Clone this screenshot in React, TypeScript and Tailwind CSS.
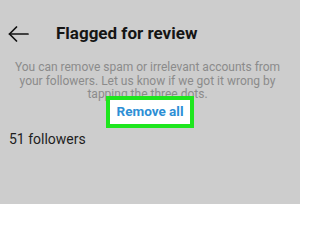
function BackArrow() {
  return (
    <svg width="21" height="16" viewBox="0 0 21 16" fill="none" stroke="#111" strokeWidth="1.7" strokeLinecap="round" strokeLinejoin="round">
      <path d="M1.5 8H20" />
      <path d="M8.5 1L1.5 8l7 7" />
    </svg>
  );
}

export default function App() {
  return (
    <div className="w-[300px] h-[204px] overflow-hidden bg-[#cdcdcd] font-['Roboto',sans-serif]">
      {/* Header */}
      <div className="flex items-center h-[24px] mt-[22px] pl-[8px]">
        <BackArrow />
        <h1 className="ml-[27px] text-[17px] font-bold text-[#151515]">Flagged for review</h1>
      </div>

      {/* Description */}
      <p className="mt-[15px] pl-[10px] pr-[15px] text-center text-[12px] leading-[13.5px] text-[#8b8b8b]">
        You can remove spam or irrelevant accounts from your followers. Let us know if we got it wrong by tapping the three dots.
      </p>

      {/* Highlighted action */}
      <div className="flex justify-center -mt-[6px]">
        <div className="w-[88px] h-[32px] flex items-center justify-center bg-white border-[4px] border-[#1ee61e]">
          <span className="text-[13.5px] font-bold text-[#2d8fd5]">Remove all</span>
        </div>
      </div>

      <p className="mt-[1px] pl-[9px] text-[14px] leading-[20px] text-[#1e1e1e]">51 followers</p>
    </div>
  );
}
